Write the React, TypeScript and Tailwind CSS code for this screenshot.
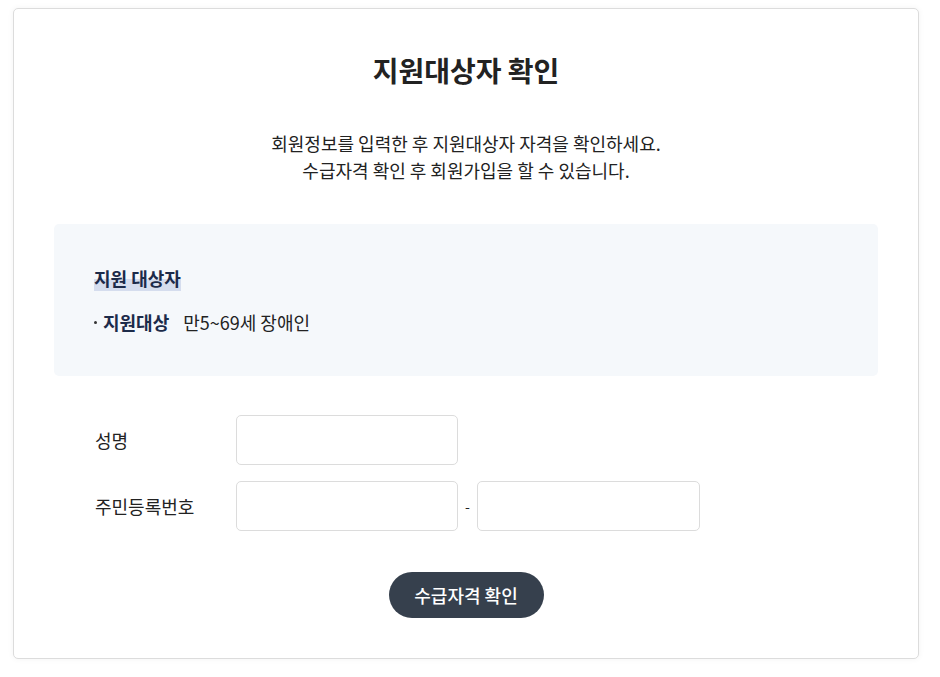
import React from 'react';

const font = "font-['Noto_Sans_CJK_KR','Noto_Sans',sans-serif]";

export default function App() {
  return (
    <div className={`min-h-screen bg-white pl-[13px] pr-[21px] pt-2 pb-4 ${font}`}>
      <div className="rounded-[5px] border border-[#dcdcdc] bg-white shadow-[0_0_6px_rgba(0,0,0,0.05)] px-10 pt-[43px] pb-10">
        {/* Title */}
        <h1 className="text-center text-[28px] leading-9 font-bold text-[#222]">지원대상자 확인</h1>

        <p className="mt-[42px] text-center text-[18px] leading-[27px] text-[#222]">
          회원정보를 입력한 후 지원대상자 자격을 확인하세요.
          <br />
          수급자격 확인 후 회원가입을 할 수 있습니다.
        </p>

        {/* Eligibility box */}
        <div className="mt-10 rounded-[5px] bg-[#f5f8fb] px-10 pt-[41px] pb-[41px]">
          <h2 className="inline-block text-[18px] leading-[26px] font-bold text-[#1c2b4a] bg-[linear-gradient(transparent_55%,#d5ddee_55%)]">
            지원 대상자
          </h2>
          <div className="mt-[18px] flex items-center text-[18px] leading-[26px] text-[#222]">
            <span className="mr-[6px] h-[3px] w-[3px] rounded-full bg-[#333]" />
            <span className="font-bold text-[#1c2b4a]">지원대상</span>
            <span className="ml-[14px]">만5~69세 장애인</span>
          </div>
        </div>

        {/* Form */}
        <div className="mt-[39px] flex flex-col gap-4 pl-[41px]">
          <div className="flex items-center">
            <label className="w-[141px] text-[18px] text-[#222]">성명</label>
            <input className="h-[50px] w-[222px] rounded-[5px] border border-[#dcdcdc] bg-white px-3 outline-none" />
          </div>
          <div className="flex items-center">
            <label className="w-[141px] text-[18px] text-[#222]">주민등록번호</label>
            <input className="h-[50px] w-[222px] rounded-[5px] border border-[#dcdcdc] bg-white px-3 outline-none" />
            <span className="w-[19px] text-center text-[14px] text-[#222]">-</span>
            <input className="h-[50px] w-[223px] rounded-[5px] border border-[#dcdcdc] bg-white px-3 outline-none" />
          </div>
        </div>

        <div className="mt-[41px] flex justify-center">
          <button className="h-[46px] w-[155px] rounded-full bg-[#36404d] text-[18px] font-medium text-white">
            수급자격 확인
          </button>
        </div>
      </div>
    </div>
  );
}
